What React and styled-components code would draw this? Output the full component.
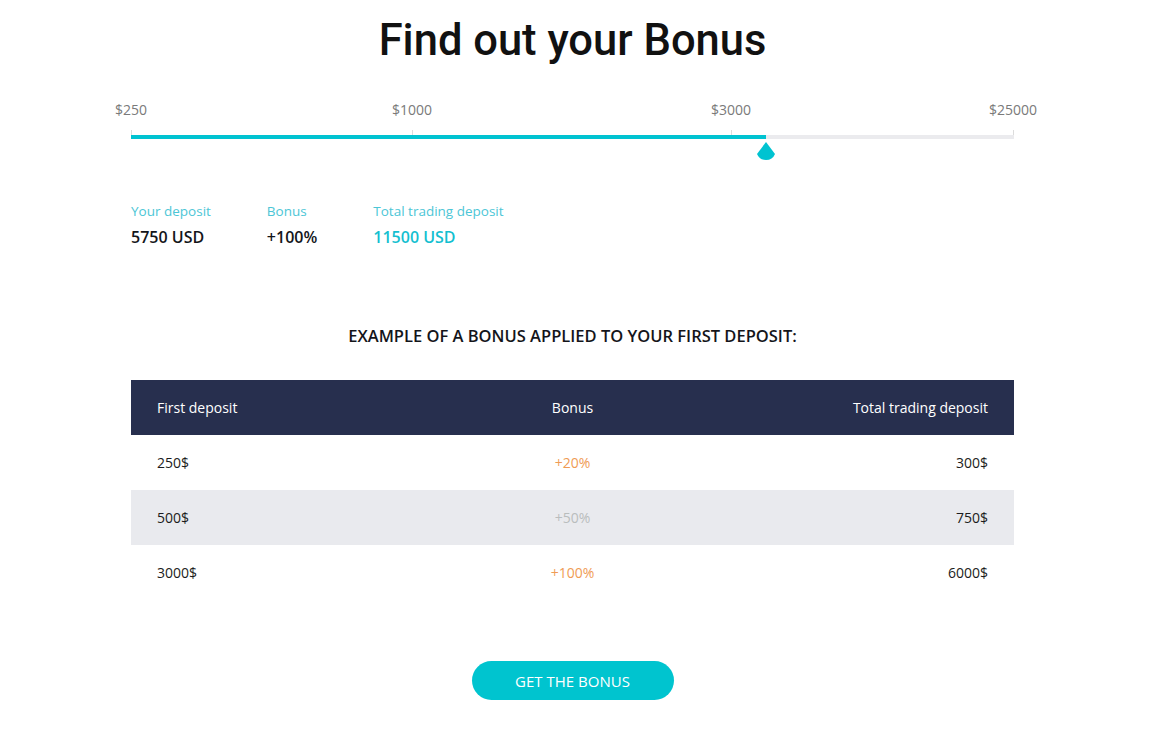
import React from 'react';
import styled, { createGlobalStyle } from 'styled-components';

const GlobalStyle = createGlobalStyle`
  body {
    margin: 0;
    background: #fff;
    font-family: "Open Sans", "Liberation Sans", sans-serif;
    color: #1b1c20;
  }
`;

const Page = styled.div`
  width: 883px;
  padding: 14px 0 30px 131px;
  display: flex;
  flex-direction: column;
`;

const Title = styled.h1`
  margin: 0;
  text-align: center;
  font-family: Roboto, "Open Sans", sans-serif;
  font-size: 43.5px;
  font-weight: 500;
  color: #111;
  line-height: 54px;
`;

const Slider = styled.div`
  position: relative;
  height: 120px;
  margin-top: 33px;
`;

const ScaleLabel = styled.span`
  position: absolute;
  top: 0;
  transform: translateX(-50%);
  font-size: 14px;
  color: #7a7a7a;
  line-height: 18px;
`;

const Track = styled.div`
  position: absolute;
  left: 0;
  right: 0;
  top: 34px;
  height: 4px;
  background: #ebebee;
`;

const Fill = styled.div`
  height: 100%;
  background: #00c3d1;
`;

const Tick = styled.span`
  position: absolute;
  top: 29px;
  width: 1px;
  height: 5px;
  background: #dcdcdc;
`;

const Thumb = styled.svg`
  position: absolute;
  top: 41px;
  width: 20px;
  height: 19px;
  margin-left: -10px;
`;

const Stats = styled.div`
  display: flex;
  gap: 56px;
  margin-top: -19px;
`;

const Stat = styled.div`
  display: flex;
  flex-direction: column;
  gap: 7px;
`;

const StatLabel = styled.span`
  font-size: 13.5px;
  color: #4cc6d6;
  line-height: 18px;
`;

const StatValue = styled.span`
  font-size: 16px;
  font-weight: 600;
  color: ${p => (p.$accent ? '#14bfd0' : '#14151a')};
  line-height: 20px;
`;

const SectionTitle = styled.h2`
  margin: 78px 0 0;
  text-align: center;
  text-transform: uppercase;
  font-size: 16.5px;
  font-weight: 600;
  color: #14151a;
  line-height: 22px;
`;

const Table = styled.div`
  margin-top: 33px;
  display: flex;
  flex-direction: column;
`;

const Row = styled.div`
  display: grid;
  grid-template-columns: 1fr 1fr 1fr;
  align-items: center;
  height: 55px;
  padding: 0 26px;
  font-size: 14px;
  background: ${p => (p.$head ? '#272f4e' : p.$shade ? '#e9eaee' : '#fff')};
  color: ${p => (p.$head ? '#fff' : '#1b1c20')};
  font-weight: ${p => (p.$head ? 500 : 400)};
`;

const Cell = styled.span`
  text-align: ${p => p.$align || 'left'};
  color: ${p => p.$color || 'inherit'};
`;

const Button = styled.button`
  align-self: center;
  margin-top: 61px;
  width: 202px;
  height: 39px;
  border: 0;
  border-radius: 20px;
  background: #00c4cf;
  color: #fff;
  font-family: inherit;
  font-size: 15px;
  text-transform: uppercase;
  cursor: pointer;
`;

const scale = [
  { label: '$250', at: 0 },
  { label: '$1000', at: 281 },
  { label: '$3000', at: 600 },
  { label: '$25000', at: 882 },
];

const rows = [
  { deposit: '250$', bonus: '+20%', color: '#ef9b55', total: '300$' },
  { deposit: '500$', bonus: '+50%', color: '#b9bdbd', total: '750$', shade: true },
  { deposit: '3000$', bonus: '+100%', color: '#ef9b55', total: '6000$' },
];

const thumbAt = 635;

export default function App() {
  return (
    <>
      <GlobalStyle />
      <Page>
        <Title>Find out your Bonus</Title>
        <Slider>
          {scale.map(s => (
            <ScaleLabel key={s.label} style={{ left: s.at }}>{s.label}</ScaleLabel>
          ))}
          {scale.map(s => (
            <Tick key={s.label} style={{ left: s.at }} />
          ))}
          <Track>
            <Fill style={{ width: thumbAt }} />
          </Track>
          <Thumb viewBox="0 0 20 19" style={{ left: thumbAt }}>
            <path d="M10 0 L19 12 A9.75 9.75 0 0 1 1 12 Z" fill="#00c3d1" />
          </Thumb>
        </Slider>
        <Stats>
          <Stat>
            <StatLabel>Your deposit</StatLabel>
            <StatValue>5750 USD</StatValue>
          </Stat>
          <Stat>
            <StatLabel>Bonus</StatLabel>
            <StatValue>+100%</StatValue>
          </Stat>
          <Stat>
            <StatLabel>Total trading deposit</StatLabel>
            <StatValue $accent>11500 USD</StatValue>
          </Stat>
        </Stats>
        <SectionTitle>Example of a bonus applied to your first deposit:</SectionTitle>
        <Table>
          <Row $head>
            <Cell>First deposit</Cell>
            <Cell $align="center">Bonus</Cell>
            <Cell $align="right">Total trading deposit</Cell>
          </Row>
          {rows.map(r => (
            <Row key={r.deposit} $shade={r.shade}>
              <Cell>{r.deposit}</Cell>
              <Cell $align="center" $color={r.color}>{r.bonus}</Cell>
              <Cell $align="right">{r.total}</Cell>
            </Row>
          ))}
        </Table>
        <Button>Get the bonus</Button>
      </Page>
    </>
  );
}
